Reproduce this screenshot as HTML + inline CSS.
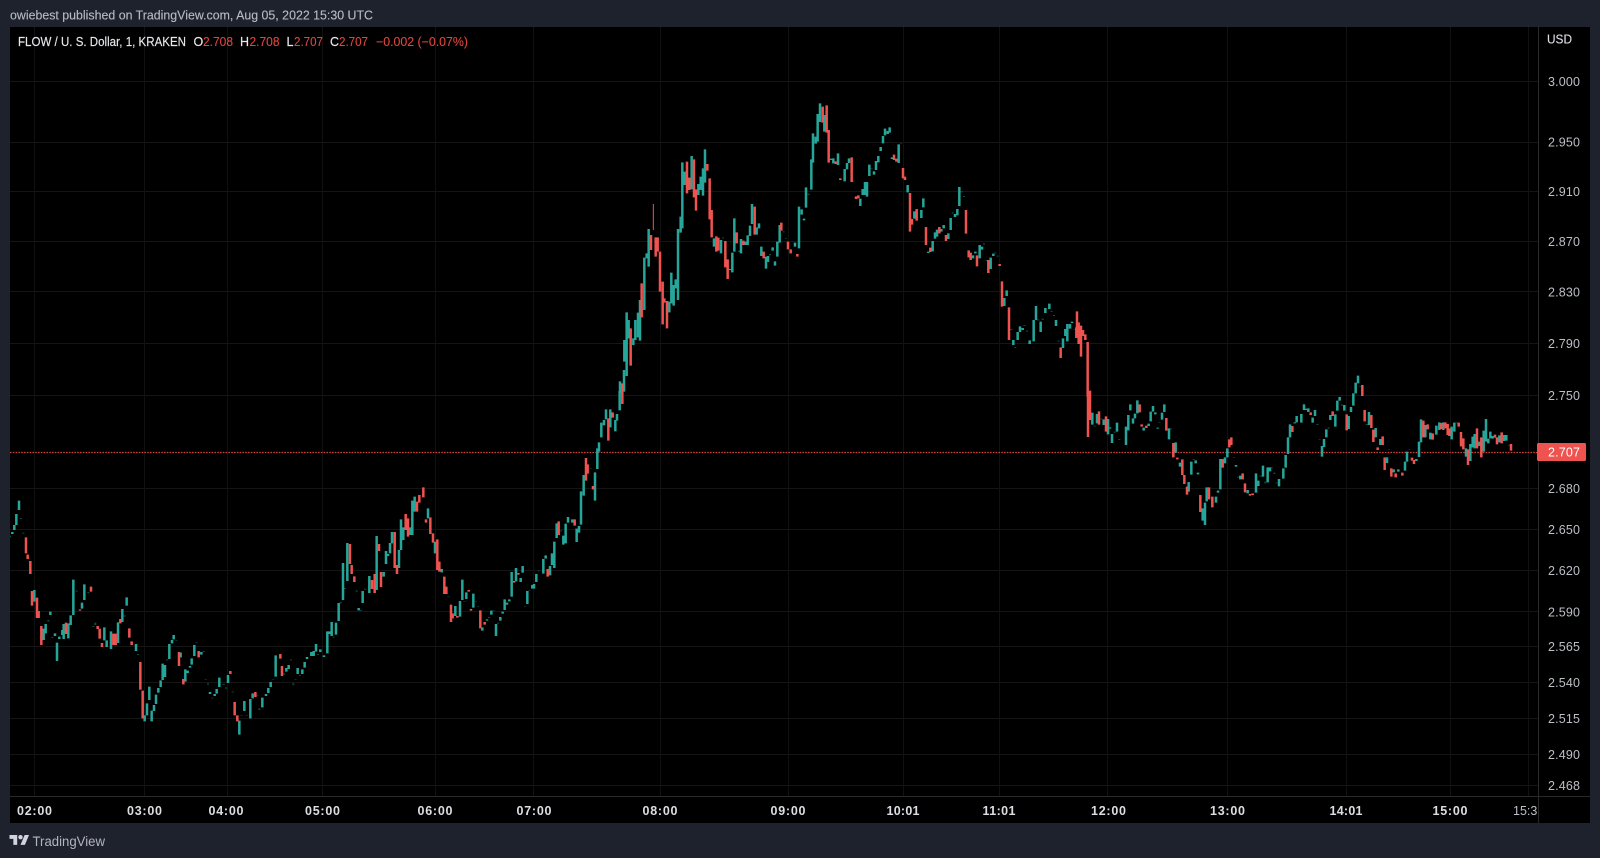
<!DOCTYPE html>
<html><head><meta charset="utf-8"><title>FLOW / U. S. Dollar</title>
<style>
html,body{margin:0;padding:0;background:#1e222d;width:1600px;height:858px;overflow:hidden}
svg{display:block}
text{font-family:"Liberation Sans",sans-serif}
.t{fill:none;stroke:#26a69a;stroke-width:7.5}
.r{fill:none;stroke:#ef5350;stroke-width:7.5}
.d{fill:none;stroke:#26a69a;stroke-width:6;opacity:.45}
.p{font-size:12.5px;fill:#bcbfc5}
.b{font-size:12.5px;font-weight:bold;fill:#dcdee3;text-anchor:middle}
.l{font-size:12.5px;fill:#e6e8ec;stroke:#e6e8ec;stroke-width:.15}
.v{font-size:12.5px;fill:#e2453f;stroke:#e2453f;stroke-width:.1}
</style></head><body>
<svg width="1600" height="858" viewBox="0 0 1600 858" xmlns="http://www.w3.org/2000/svg">
<defs><clipPath id="c"><rect x="10" y="27" width="1528" height="796"/></clipPath></defs>
<rect width="1600" height="858" fill="#1e222d"/>
<text x="10" y="19.5" font-size="12.5" fill="#b8bbc2" stroke="#b8bbc2" stroke-width=".12" textLength="363" lengthAdjust="spacingAndGlyphs">owiebest published on TradingView.com, Aug 05, 2022 15:30 UTC</text>
<rect x="10" y="27" width="1580" height="796" fill="#000"/>
<g stroke="#151515" stroke-width="1" fill="none">
<path d="M10 81.5H1538M10 142.5H1538M10 191.5H1538M10 241.5H1538M10 291.5H1538M10 343.5H1538M10 395.5H1538M10 488.5H1538M10 529.5H1538M10 570.5H1538M10 611.5H1538M10 646.5H1538M10 682.5H1538M10 718.5H1538M10 754.5H1538M10 785.5H1538"/>
<path stroke="#111" d="M34.5 27V796M144.5 27V796M227.5 27V796M322.5 27V796M435.5 27V796M533.5 27V796M660.5 27V796M788.5 27V796M903.5 27V796M999.5 27V796M1107.5 27V796M1227.5 27V796M1346.5 27V796M1450.5 27V796M1528.5 27V796"/>
</g>
<path d="M10 452.5H1538" stroke="#d2423f" stroke-width="1.2" stroke-dasharray="1.6 1.2"/>

<g clip-path="url(#c)">
<g transform="translate(0,470) scale(.33333)">
<path class="d" d="M30 197V201M62 144V147M70 188V191M145 450V454M157 501V504M230 362V365M265 366V369M280 468V471M286 458V465M374 436V440M414 552V555M501 568V571M529 511V513M590 517V519M611 543V546M617 628V630M624 640V644M637 683V686M671 642V645M678 652V656M698 664V667M725 736V738M740 736V738M772 674V677M778 715V720M820 628V630M853 610V614M873 568V571M880 640V645M887 628V630M900 615V618M954 552V555M1001 500V503M1022 396V400M1035 354V357M1070 361V365M1082 420V423M1096 356V359"/>
<path class="t" d="M37 186V192M43 165V180M49 132V165M57 92V120M103 360V395M131 476V510M137 462V490M151 425V435M165 490V498M171 518V573M178 500V507M187 480V495M191 462V507M205 460V505M212 436V465M220 329V435M246 398V416M253 343V390M313 472V511M320 511V531M333 484V537M354 457V519M367 417V456M380 382V407M408 522V543M434 736V754M441 700V736M448 650V690M455 722V754M462 705V723M468 674V702M475 654V668M482 631V651M488 581V630M495 585V621M508 522V567M516 510V520M521 495V508M542 548V562M556 598V635M563 602V609M570 588V593M575 565V584M583 525V558M604 546V554M630 666V672M644 672V678M650 657V671M658 623V651M684 615V639M718 752V794M733 693V723M751 687V745M758 670V685M787 683V712M798 672V678M805 654V669M812 636V651M827 556V620M859 594V605M866 585V597M893 594V612M907 598V612M914 576V593M921 561V567M934 546V558M941 543V558M948 522V545M961 538V546M972 556V561M982 484V550M988 484V492M995 456V498M1008 458V494M1016 399V453M1029 279V390M1042 219V333M1076 414V421M1088 363V399M1108 318V369M1130 198V360M1151 306V320M1158 243V282M1164 252V258M1170 219V250M1176 186V220M1197 240V294"/>
<path class="r" d="M78 202V250M83 254V267M91 273V312M96 363V407M111 383V444M116 423V444M124 468V525M198 458V492M240 418V422M273 350V365M293 468V477M299 476V506M306 519V531M340 491V525M347 491V525M361 447V460M388 475V503M395 514V525M421 576V659M428 662V745M537 546V588M550 627V643M596 543V562M691 603V612M704 696V736M712 736V754M766 666V681M841 552V566M846 588V618M1050 222V282M1055 285V312M1063 319V336M1116 330V357M1124 312V369M1137 222V243M1143 306V351M1184 186V294M1191 285V312"/>
</g>

<g transform="translate(400,130) scale(.33333)">
<path class="d" d="M145 1398V1400M193 1413V1415M228 1414V1416M234 1428V1430M267 1461V1464M281 1441V1443M294 1478V1481M375 1429V1431M389 1381V1383M416 1322V1324M483 1201V1204M572 1015V1017M969 322V325M1017 362V366M1110 372V376M1151 304V307M1158 324V326"/>
<path class="t" d="M3 1168V1260M10 1192V1230M31 1192V1215M37 1112V1215M44 1100V1145M84 1135V1165M105 1235V1270M125 1317V1327M166 1428V1458M180 1413V1460M187 1349V1410M199 1387V1407M220 1391V1433M247 1492V1502M261 1468V1472M274 1442V1454M288 1482V1518M301 1461V1472M308 1445V1451M314 1408V1440M321 1418V1424M328 1408V1414M335 1326V1400M348 1314V1354M362 1344V1356M368 1308V1328M382 1383V1422M397 1365V1376M402 1362V1376M409 1332V1356M430 1287V1331M437 1276V1286M450 1308V1336M456 1270V1305M463 1235V1314M470 1180V1224M490 1217V1244M497 1181V1240M504 1161V1178M517 1168V1178M530 1196V1236M537 1188V1208M543 1084V1184M551 1035V1097M585 1027V1112M592 955V1017M597 937V965M604 878V922M612 870V886M618 838V868M631 838V892M646 870V904M651 852V872M659 783V841M660 754V790M672 720V785M673 630V695M680 547V738M686 570V625M700 625V645M706 570V630M714 548V622M720 510V632M733 383V540M740 370V385M746 297V410M808 515V547M814 428V520M821 465V527M827 448V475M834 297V510M842 260V308M847 97V295M854 125V165M875 78V178M895 162V195M902 140V180M909 115V197M915 58V158M942 325V350M963 330V370M997 368V427M1003 265V365M1023 327V370M1036 335V345M1043 316V345M1050 287V318M1056 222V282M1070 292V314M1077 280V295M1084 350V378M1098 380V416M1104 378V396M1118 352V362M1125 394V407M1132 335V380M1139 285V338M1185 338V350M1197 230V355"/>
<path class="r" d="M17 1152V1200M24 1165V1220M51 1115V1145M58 1095V1118M70 1072V1102M78 1168V1178M91 1162V1212M99 1210V1238M112 1228V1320M118 1295V1325M133 1340V1392M139 1370V1392M153 1424V1476M158 1450V1465M172 1458V1463M206 1380V1385M213 1437V1442M241 1441V1495M254 1476V1484M342 1353V1358M355 1329V1334M443 1317V1340M476 1174V1215M524 1168V1187M558 984V1052M563 1003V1031M579 1068V1078M625 865V932M638 847V863M667 760V822M692 595V707M725 460V562M753 315V360M767 322V380M773 322V365M780 365V485M788 455V583M793 505V518M801 513V595M861 95V190M868 143V180M882 88V202M888 178V242M922 102V122M929 145V268M935 240V322M949 319V365M955 323V362M976 333V412M983 388V447M990 417V420M1010 307V340M1030 332V345M1064 230V314M1091 365V385M1144 278V302M1164 335V358M1172 358V370M1192 372V380"/>
<path d="M760 222V300" fill="none" stroke="#ef5350" stroke-width="3"/>
</g>

<g transform="translate(780,90) scale(.33333)">
<path class="d" d="M86 311V315M222 272V274M275 235V237M363 160V162M518 367V371M545 304V307M552 318V321M612 460V464M620 510V513M646 487V490M653 497V500M694 717V720M706 771V774M733 705V708M741 722V725M775 688V692M788 686V690M815 663V666M822 675V678M836 752V755M883 717V719M944 1007V1010M964 985V988M1004 1025V1028M1018 1047V1050"/>
<path class="t" d="M65 358V374M72 386V391M78 292V353M94 208V299M99 130V218M107 140V161M113 72V155M120 40V96M133 75V125M153 206V210M160 205V220M174 190V225M194 237V274M201 219V238M207 205V219M241 326V348M248 297V315M255 276V315M261 276V320M268 224V258M282 244V254M288 213V240M295 198V217M302 171V183M309 138V160M315 116V136M323 123V132M329 112V128M336 202V207M356 163V219M383 285V307M403 364V386M424 360V384M430 325V352M445 485V489M458 453V484M465 427V446M471 419V440M484 417V425M491 405V415M505 430V447M512 384V420M525 372V381M532 357V376M538 291V348M579 496V505M586 485V490M599 465V505M606 470V479M632 503V537M640 491V498M673 624V648M680 601V618M700 750V765M713 726V750M720 709V726M728 714V720M749 751V762M761 690V754M768 648V690M782 695V726M796 654V669M808 641V657M828 690V708M849 745V774M856 717V738M862 702V754M870 702V716M876 695V699M937 968V1004M951 972V1000M971 988V1005M984 987V1033M990 1012V1016M996 1032V1059M1011 998V1025"/>
<path class="r" d="M128 50V98M140 46V128M146 120V218M167 214V222M181 265V270M215 202V276M228 319V327M235 316V325M342 194V210M349 206V215M369 234V265M375 260V270M390 309V425M396 387V404M410 357V392M438 411V465M451 473V486M478 411V430M498 435V453M558 360V431M566 481V502M572 488V510M591 496V529M625 510V549M659 522V528M666 574V650M687 652V750M842 772V804M889 712V744M891 664V714M896 697V762M903 707V800M909 720V738M916 733V750M923 756V920M924 920V1041M930 902V990M957 964V1004M978 979V1025"/>
</g>

<g transform="translate(1100,360) scale(.33333)">
<path class="d" d="M178 186V188M213 205V208M281 297V300M402 292V294M414 350V353M482 347V350M496 365V370M516 322V325M523 338V342M530 368V370M652 192V195M659 238V240M686 202V206M726 133V137M780 78V80M800 192V195M867 267V269M928 268V270M1070 187V190M1226 256V258"/>
<path class="t" d="M78 200V255M85 165V211M91 133V151M99 175V191M105 161V175M112 121V160M131 203V212M146 191V198M152 155V184M159 138V155M166 157V163M173 203V206M186 158V179M193 133V156M207 205V238M227 247V278M240 308V320M266 366V395M274 305V344M287 301V310M294 338V343M308 445V482M315 428V495M320 382V424M348 410V428M354 392V398M361 297V388M375 292V310M382 265V292M408 315V320M421 347V358M443 390V400M468 340V398M475 362V378M489 317V350M503 322V367M510 322V334M537 357V379M550 325V356M557 285V323M564 232V282M570 193V232M584 187V190M590 168V187M604 162V188M612 133V150M618 146V150M625 145V156M638 173V188M645 150V168M666 258V290M672 237V261M679 208V232M691 165V180M706 163V200M712 122V152M719 111V122M733 135V152M746 168V207M753 141V156M760 100V137M767 68V100M774 47V70M807 156V195M827 204V232M841 237V255M861 292V309M881 328V337M895 328V335M915 305V332M921 275V305M949 297V303M957 245V291M963 178V247M976 195V232M991 218V238M1009 197V224M1018 187V210M1030 187V210M1055 200V238M1063 188V215M1098 265V290M1111 252V303M1118 230V262M1124 222V265M1138 245V258M1151 212V275M1158 177V245M1165 236V250M1171 215V235M1178 228V236M1198 226V247M1212 225V243M1219 225V242"/>
<path class="r" d="M119 133V157M125 193V200M139 197V204M199 174V212M220 249V292M232 293V298M247 298V345M253 345V372M261 380V404M301 405V456M327 382V418M337 410V442M368 297V323M388 238V262M394 232V255M428 340V358M435 370V397M450 402V407M458 400V405M577 198V216M632 157V165M698 154V168M740 163V211M787 75V108M794 150V184M814 165V204M820 209V246M848 229V255M833 262V270M854 292V330M874 325V350M887 340V352M907 338V347M936 293V302M942 300V312M970 182V232M983 193V208M998 220V239M1024 189V207M1036 187V205M1043 192V225M1048 205V228M1076 188V200M1083 216V259M1090 235V268M1104 268V315M1131 205V265M1144 232V292M1185 224V233M1191 232V253M1205 217V250M1233 252V272"/>
</g>
</g>

<text x="18" y="46" class="l" textLength="168" lengthAdjust="spacingAndGlyphs">FLOW / U. S. Dollar, 1, KRAKEN</text>
<text x="193.5" y="46" class="l">O</text><text x="203" y="46" class="v" textLength="30" lengthAdjust="spacingAndGlyphs">2.708</text>
<text x="240" y="46" class="l">H</text><text x="249.5" y="46" class="v" textLength="30" lengthAdjust="spacingAndGlyphs">2.708</text>
<text x="286.5" y="46" class="l">L</text><text x="294" y="46" class="v" textLength="29" lengthAdjust="spacingAndGlyphs">2.707</text>
<text x="330" y="46" class="l">C</text><text x="339" y="46" class="v" textLength="29" lengthAdjust="spacingAndGlyphs">2.707</text>
<text x="376" y="46" class="v" textLength="92" lengthAdjust="spacingAndGlyphs">−0.002 (−0.07%)</text>

<path d="M1538.5 27V823M10 796.5H1590" stroke="#2a2a2a" stroke-width="1" fill="none"/>

<text x="1547" y="43.5" font-size="12.5" fill="#dcdee3" stroke="#dcdee3" stroke-width=".12" textLength="25" lengthAdjust="spacingAndGlyphs">USD</text>
<g class="p">
<text x="1548" y="86" textLength="32">3.000</text>
<text x="1548" y="146.5" textLength="32">2.950</text>
<text x="1548" y="196" textLength="32">2.910</text>
<text x="1548" y="246" textLength="32">2.870</text>
<text x="1548" y="296.5" textLength="32">2.830</text>
<text x="1548" y="348" textLength="32">2.790</text>
<text x="1548" y="400" textLength="32">2.750</text>
<text x="1548" y="493" textLength="32">2.680</text>
<text x="1548" y="534" textLength="32">2.650</text>
<text x="1548" y="575" textLength="32">2.620</text>
<text x="1548" y="616.5" textLength="32">2.590</text>
<text x="1548" y="651" textLength="32">2.565</text>
<text x="1548" y="687" textLength="32">2.540</text>
<text x="1548" y="723" textLength="32">2.515</text>
<text x="1548" y="759" textLength="32">2.490</text>
<text x="1548" y="790" textLength="32">2.468</text>
</g>
<rect x="1537" y="443" width="49" height="18" rx="1.5" fill="#ef5350"/>
<text x="1548" y="456.5" font-size="12.5" fill="#fff" textLength="32">2.707</text>

<g class="b">
<text x="34.5" y="815" textLength="35">02:00</text>
<text x="144.5" y="815" textLength="35">03:00</text>
<text x="226" y="815" textLength="35">04:00</text>
<text x="322.5" y="815" textLength="35">05:00</text>
<text x="435" y="815" textLength="35">06:00</text>
<text x="534" y="815" textLength="35">07:00</text>
<text x="660" y="815" textLength="35">08:00</text>
<text x="788" y="815" textLength="35">09:00</text>
<text x="903" y="815" textLength="33">10:01</text>
<text x="999" y="815" textLength="33">11:01</text>
<text x="1108.5" y="815" textLength="35">12:00</text>
<text x="1227.5" y="815" textLength="35">13:00</text>
<text x="1346" y="815" textLength="33">14:01</text>
<text x="1450" y="815" textLength="35">15:00</text>
</g>
<text x="1513" y="815" class="p">15:3</text>

<g transform="translate(9.5,832.8) scale(.55)" fill="#d1d4dc"><path d="M14 22H7V11H0V4h14v18zM28 22h-8l7.5-18h8L28 22z"/><circle cx="20" cy="8" r="4"/></g>
<text x="32.5" y="846" font-size="13.5" fill="#b2b5be" textLength="72.5" lengthAdjust="spacingAndGlyphs">TradingView</text>
</svg>
</body></html>
